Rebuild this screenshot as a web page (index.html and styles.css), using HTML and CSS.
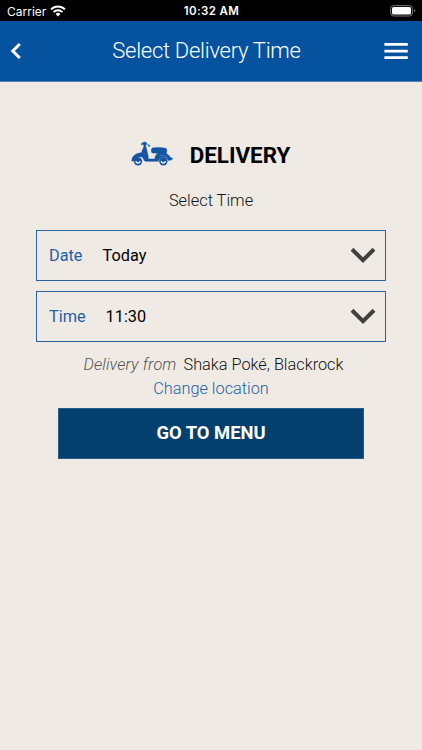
FILE: index.html
```html
<!DOCTYPE html>
<html lang="en">
<head>
<meta charset="utf-8">
<title>Select Delivery Time</title>
<link rel="stylesheet" href="styles.css">
</head>
<body>
<div class="status">
  <div class="carrier"><span>Carrier</span>
    <svg width="16" height="12" viewBox="0 0 16 12" fill="none" stroke="#fff" stroke-width="2"><path d="M1.1 4.4a9.8 9.8 0 0 1 13.8 0M3.6 7.1a6.2 6.2 0 0 1 8.8 0"/><path d="M8 11.4 5.6 9a3.4 3.4 0 0 1 4.8 0z" fill="#fff" stroke="none"/></svg>
  </div>
  <span class="clock">10:32 AM</span>
  <svg class="battery" width="26" height="12" viewBox="0 0 26 12"><rect x=".6" y=".6" width="21.8" height="10.4" rx="3" fill="none" stroke="#777"/><rect x="2" y="2" width="19" height="7.6" rx="1.6" fill="#fff"/><path d="M24 4v3.6q1.3-.5 1.3-1.8T24 4z" fill="#777"/></svg>
</div>
<header class="bar">
  <svg width="12" height="18" viewBox="0 0 12 18" fill="none" stroke="#fff" stroke-width="3"><path d="M9.8 2 2.8 9l7 7"/></svg>
  <h1>Select Delivery Time</h1>
  <svg width="24" height="18" viewBox="0 0 24 18" fill="#fff"><path d="M.4 1h23.4v2.7H.4zM.4 7.7h23.4v2.7H.4zM.4 14.2h23.4v2.7H.4z"/></svg>
</header>
<main>
  <div class="mode">
    <svg width="42" height="27" viewBox="18 18 126 81" fill="#1455a4">
      <circle cx="39" cy="79" r="12.5"/><circle cx="115" cy="79" r="12.5"/>
      <g fill="#efebe4"><path d="M31 78h16a8 8 0 0 1-16 0zM107 78h16a8 8 0 0 1-16 0z"/></g>
      <path stroke="#1455a4" stroke-width="1.5" d="M48 27 57 21l6 1 2 4-3 6 5 20q3 12 3 20h20q-1-7 3-12l7-5-18-1q-6-4-1-15 20-4 42 1 4 4 2 12l-2 3q10 5 14 13l5 1v4l-6 3h-7q-3-9-14-9-12 0-15 12H62q-3 0-5-4l-3-7q-6-4-12-2-9 1-13 12h-9q1-14 12-20 8-4 17-5l8-19-2-6-6 1z"/>
      <path d="M104 61q15-2 24 8" fill="none" stroke="#7b9fc5" stroke-width="1.4"/>
      <circle cx="39" cy="78" r="4"/><circle cx="115" cy="78" r="4"/>
      <circle cx="72" cy="32" r="3"/><path d="m63 25 8 5" stroke="#1455a4" stroke-width="2"/>
    </svg>
    <h2>DELIVERY</h2>
  </div>
  <p class="prompt">Select Time</p>
  <div class="field date"><span class="label">Date</span><span class="value">Today</span>
    <svg width="26" height="17" viewBox="0 0 26 17" fill="none" stroke="#414040" stroke-width="4"><path d="m2 2.3 11 10.8L24 2.3"/></svg></div>
  <div class="field time"><span class="label">Time</span><span class="value">11:30</span>
    <svg width="26" height="17" viewBox="0 0 26 17" fill="none" stroke="#414040" stroke-width="4"><path d="m2 2.3 11 10.8L24 2.3"/></svg></div>
  <p class="from"><em>Delivery from</em><span>Shaka Poké, Blackrock</span></p>
  <a class="change">Change location</a>
  <button class="go">GO TO MENU</button>
</main>
</body>
</html>
```
FILE: styles.css
```css
* { box-sizing: border-box; }
body { margin: 0; min-height: 750px; background: #efebe4; color: #111; font-family: Roboto, sans-serif; }
h1, h2, p { margin: 0; }
svg { display: block; flex: none; }
.status { height: 21px; padding: 0 6px 0 7px; background: #000; color: #fff; display: grid; grid-template-columns: 1fr auto 1fr; align-items: center; font: 12px/21px Inter, sans-serif; }
.carrier { display: flex; align-items: center; gap: 4px; }
.clock { font-weight: 600; font-size: 11.5px; letter-spacing: .4px; padding-top: 1px; }
.battery { justify-self: end; }
.bar { height: 61px; padding: 0 14px 1px 10px; background: #05529e; border-bottom: 1px solid #4f83b5; color: #fff; display: flex; align-items: center; justify-content: space-between; }
.bar h1 { font-size: 22px; line-height: 28px; font-weight: 300; letter-spacing: -.28px; margin-left: 7px; white-space: nowrap; }
main { padding: 58px 36px 0; display: flex; flex-direction: column; align-items: center; }
.mode { height: 30px; display: flex; align-items: center; gap: 17px; }
.mode svg { margin: 0 0 2px -1px; }
.mode h2 { font-size: 22.4px; line-height: 30px; font-weight: 700; color: #000; }
.prompt { margin-top: 21px; font-size: 16.4px; line-height: 20px; font-weight: 300; }
.field { width: 350px; height: 51px; border: 1px solid #2465a2; padding: 0 9px 0 12px; display: flex; align-items: center; font-size: 16.3px; }
.date { margin-top: 19px; }
.time { margin-top: 10px; }
.label { color: #1d5fa8; }
.value { color: #000; margin-left: 20px; }
.field svg { margin-left: auto; }
.from { margin-top: 12px; padding-left: 5px; display: flex; gap: 7px; font-size: 16.3px; line-height: 22px; font-weight: 300; white-space: nowrap; }
.from em { color: #555; letter-spacing: .12px; }
.change { margin-top: 2px; color: #1d5fa8; font-size: 16.3px; line-height: 22px; font-weight: 300; }
.go { margin-top: 8px; width: 306px; height: 51px; border: 1px solid #245b88; background: #03406f; color: #fff; font: 700 18.4px/22px Roboto, sans-serif; padding: 0 0 1px; }
```
